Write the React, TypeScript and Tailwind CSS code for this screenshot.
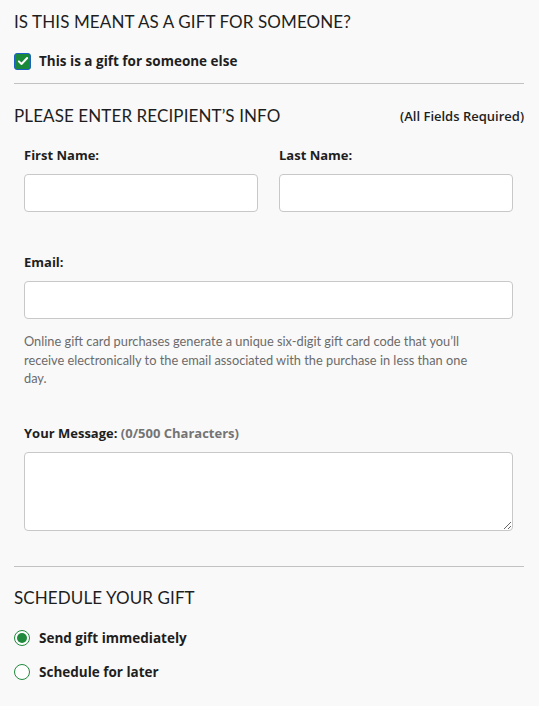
import React from 'react';

const font = { fontFamily: 'Lato, "Open Sans", sans-serif' };
const boldFont = { fontFamily: '"Open Sans", Lato, sans-serif' };

const Label = ({ children }: { children: React.ReactNode }) => (
  <label className="block text-[13px] leading-[18px] font-bold text-[#1e1e1e] mb-[10px]" style={boldFont}>
    {children}
  </label>
);

const TextInput = () => (
  <input type="text" className="block w-full h-[38px] bg-white border border-[#c8c8c8] rounded-[4px] px-3 text-sm outline-none" />
);

const Radio = ({ checked, label }: { checked?: boolean; label: string }) => (
  <div className="flex items-center gap-[9px]">
    <span className="w-[16px] h-[16px] rounded-full border-[1.5px] border-[#1f8a3c] flex items-center justify-center bg-white">
      {checked && <span className="w-[10px] h-[10px] rounded-full bg-[#1f8a3c]" />}
    </span>
    <span className="text-[13.5px] font-bold text-[#1e1e1e]" style={boldFont}>{label}</span>
  </div>
);

export default function App() {
  return (
    <div className="min-h-screen w-full bg-[#f9f9f9] pl-[14px] pr-[15px] pt-[12px] pb-6 text-[#1e1e1e]" style={font}>
      <h2 className="text-[17px] leading-[20px] tracking-[0.1px]">IS THIS MEANT AS A GIFT FOR SOMEONE?</h2>

      <div className="flex items-center gap-[8px] mt-[19px]">
        <span className="w-[17px] h-[17px] rounded-[3px] bg-[#1a8a3a] border-[1.5px] border-[#1d5fc8] flex items-center justify-center">
          <svg viewBox="0 0 16 16" className="w-[12px] h-[12px]" fill="none" stroke="white" strokeWidth="2.6" strokeLinecap="round" strokeLinejoin="round">
            <path d="M2.5 8.5l3.5 3.5 7.5-8" />
          </svg>
        </span>
        <span className="text-[13.5px] font-bold" style={boldFont}>This is a gift for someone else</span>
      </div>

      <div className="border-t border-[#c2c2c2] mt-[12px]" />

      <div className="flex items-center justify-between mt-[22px]">
        <h2 className="text-[17px] leading-[20px] tracking-[0.1px]">PLEASE ENTER RECIPIENT’S INFO</h2>
        <span className="text-[13px] font-semibold" style={boldFont}>(All Fields Required)</span>
      </div>

      <div className="pl-[10px] pr-[11px]">
        <div className="grid grid-cols-2 gap-[21px] mt-[20px]">
          <div>
            <Label>First Name:</Label>
            <TextInput />
          </div>
          <div>
            <Label>Last Name:</Label>
            <TextInput />
          </div>
        </div>

        <div className="mt-[41px]">
          <Label>Email:</Label>
          <TextInput />
        </div>

        <p className="text-[12.8px] leading-[18.5px] text-[#6b6b6b] mt-[13px]">
          Online gift card purchases generate a unique six-digit gift card code that you’ll
          <br />
          receive electronically to the email associated with the purchase in less than one
          <br />
          day.
        </p>

        <div className="mt-[36px]">
          <Label>
            Your Message: <span className="text-[#747474]">(0/500 Characters)</span>
          </Label>
          <textarea className="block w-full h-[79px] bg-white border border-[#c8c8c8] rounded-[4px] p-2 text-sm outline-none" />
        </div>
      </div>

      <div className="border-t border-[#c2c2c2] mt-[35px]" />

      <h2 className="text-[17px] leading-[20px] tracking-[0.1px] mt-[21px]">SCHEDULE YOUR GIFT</h2>

      <div className="flex flex-col gap-[14px] mt-[20px]">
        <Radio checked label="Send gift immediately" />
        <Radio label="Schedule for later" />
      </div>
    </div>
  );
}
